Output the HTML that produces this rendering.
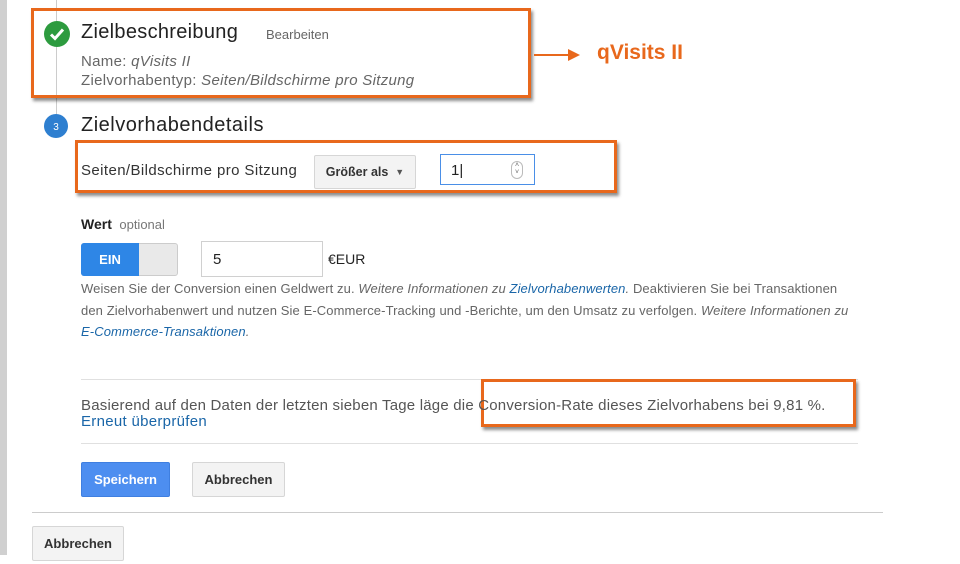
<!DOCTYPE html>
<html><head><meta charset="utf-8"><style>
body{margin:0;width:960px;height:564px;background:#fff;position:relative;overflow:hidden;font-family:"Liberation Sans",sans-serif;color:#333}
.a{position:absolute;white-space:nowrap}
.ob{position:absolute;border:3px solid #e8681c;box-shadow:2px 3px 3px rgba(0,0,0,.45)}
.btn{position:absolute;background:#f3f3f3;border:1px solid #d6d6d6;border-radius:2px;font-weight:bold;font-size:13px;color:#333;display:flex;align-items:center;justify-content:center}
.s{font-size:13px;color:#666;letter-spacing:.1px}
i{font-style:italic}
.l{color:#1a66a8}
</style></head><body>
<div class="a" style="left:0;top:0;width:7px;height:555px;background:#d0d0d0"></div>
<div class="a" style="left:56px;top:0;width:1px;height:120px;background:#ccc"></div>

<div class="ob" style="left:31px;top:8px;width:494px;height:84px"></div>
<svg class="a" style="left:43px;top:20px" width="28" height="28"><circle cx="14" cy="14" r="13" fill="#2d9b3f"/><path d="M8 14.5l4 4 8-9" stroke="#fff" stroke-width="3" fill="none"/></svg>
<div class="a" style="left:81px;top:21px;font-size:20px;color:#222;letter-spacing:.3px">Zielbeschreibung</div>
<div class="a" style="left:266px;top:27px;font-size:13px;color:#666">Bearbeiten</div>
<div class="a" style="left:81px;top:53px;font-size:15px;color:#666;letter-spacing:.3px">Name: <i>qVisits II</i></div>
<div class="a" style="left:81px;top:72px;font-size:15px;color:#666;letter-spacing:.3px">Zielvorhabentyp: <i>Seiten/Bildschirme pro Sitzung</i></div>

<div class="a" style="left:534px;top:54px;width:38px;height:2px;background:#e8681c"></div>
<svg class="a" style="left:568px;top:49px" width="12" height="12"><path d="M0 0L12 6L0 12z" fill="#e8681c"/></svg>
<div class="a" style="left:597px;top:41px;font-size:21px;font-weight:bold;color:#e8681c">qVisits II</div>

<svg class="a" style="left:43px;top:113px" width="26" height="26"><circle cx="13" cy="13" r="12" fill="#2e7fd0"/><text x="13" y="17" fill="#fff" font-size="10" text-anchor="middle" font-family="Liberation Sans">3</text></svg>
<div class="a" style="left:81px;top:114px;font-size:20px;color:#222;letter-spacing:.5px">Zielvorhabendetails</div>

<div class="ob" style="left:75px;top:140px;width:536px;height:47px"></div>
<div class="a" style="left:81px;top:162px;font-size:15px;color:#333;letter-spacing:.4px">Seiten/Bildschirme pro Sitzung</div>
<div class="btn" style="left:314px;top:155px;width:100px;height:32px;font-size:12.5px">Größer als&nbsp;&nbsp;<span style="font-size:9px;color:#555">▼</span></div>
<div class="a" style="left:440px;top:154px;width:95px;height:31px;border:1px solid #4a8fe7;box-sizing:border-box"></div>
<div class="a" style="left:451px;top:162px;font-size:15px;color:#222">1|</div>
<div class="a" style="left:511px;top:161px;width:10px;height:16px;border:1px solid #bbb;border-radius:6px;font-size:7px;line-height:7px;text-align:center;color:#666">˄<br>˅</div>

<div class="a" style="left:81px;top:216px;font-size:14px;font-weight:bold;color:#222">Wert <span style="font-weight:normal;font-size:13px;color:#777">&nbsp;optional</span></div>
<div class="a" style="left:81px;top:243px;width:97px;height:33px;border-radius:3px;background:#e9e9e9;border:1px solid #ccc;box-sizing:border-box"></div>
<div class="a" style="left:81px;top:243px;width:58px;height:33px;border-radius:3px 0 0 3px;background:#2e86e6;color:#fff;font-weight:bold;font-size:13px;line-height:33px;text-align:center">EIN</div>
<div class="a" style="left:201px;top:241px;width:122px;height:36px;border:1px solid #d0d0d0;box-sizing:border-box"></div>
<div class="a" style="left:213px;top:251px;font-size:15px;color:#222">5</div>
<div class="a" style="left:328px;top:251px;font-size:14px;color:#222">€EUR</div>
<div class="a s" style="left:81px;top:281px">Weisen Sie der Conversion einen Geldwert zu. <i>Weitere Informationen zu <span class="l">Zielvorhabenwerten</span>.</i> Deaktivieren Sie bei Transaktionen</div>
<div class="a s" style="left:81px;top:303px">den Zielvorhabenwert und nutzen Sie E-Commerce-Tracking und -Berichte, um den Umsatz zu verfolgen. <i>Weitere Informationen zu</i></div>
<div class="a s" style="left:81px;top:324px"><i class="l">E-Commerce-Transaktionen</i><i>.</i></div>

<div class="a" style="left:81px;top:379px;width:777px;height:1px;background:#e0e0e0"></div>
<div class="ob" style="left:481px;top:379px;width:369px;height:42px"></div>
<div class="a" style="left:81px;top:397px;font-size:15px;color:#555;letter-spacing:.2px">Basierend auf den Daten der letzten sieben Tage läge die Conversion-Rate dieses Zielvorhabens bei 9,81 %.</div>
<div class="a l" style="left:81px;top:413px;font-size:15px;letter-spacing:.3px">Erneut überprüfen</div>
<div class="a" style="left:81px;top:443px;width:777px;height:1px;background:#e0e0e0"></div>

<div class="btn" style="left:81px;top:462px;width:87px;height:33px;background:#4d8ef0;border-color:#3f7fe0;color:#fff">Speichern</div>
<div class="btn" style="left:192px;top:462px;width:91px;height:33px">Abbrechen</div>
<div class="a" style="left:32px;top:512px;width:851px;height:1px;background:#ccc"></div>
<div class="btn" style="left:32px;top:526px;width:90px;height:33px">Abbrechen</div>
</body></html>
